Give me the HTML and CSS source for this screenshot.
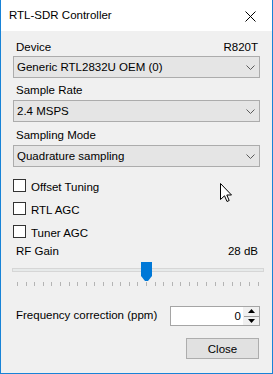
FILE: index.html
```html
<!DOCTYPE html>
<html lang="en">
<head>
	<meta charset="UTF-8">
	<title>RTL-SDR Controller</title>
	<link rel="stylesheet" href="styles.css">
</head>
<body>
	<div class="window">
		<div class="titlebar">
			<span class="title">RTL-SDR Controller</span>
			<svg class="close-x" width="11" height="11" viewBox="0 0 11 11">
				<path d="M0.5 0.5 L10.5 10.5 M10.5 0.5 L0.5 10.5" stroke="#000" stroke-width="1" fill="none"/>
			</svg>
		</div>
		<div class="content">
			<div class="label-row first">
				<span>Device</span>
				<span class="right">R820T</span>
			</div>
			<div class="combo first">
				<span>Generic RTL2832U OEM (0)</span>
				<svg class="chev" width="9" height="5" viewBox="0 0 9 5"><path d="M0.5 0.5 L4.5 4.5 L8.5 0.5" stroke="#5a5a5a" fill="none"/></svg>
			</div>
			<div class="label-row rate">
				<span>Sample Rate</span>
			</div>
			<div class="combo">
				<span>2.4 MSPS</span>
				<svg class="chev" width="9" height="5" viewBox="0 0 9 5"><path d="M0.5 0.5 L4.5 4.5 L8.5 0.5" stroke="#5a5a5a" fill="none"/></svg>
			</div>
			<div class="label-row mode">
				<span>Sampling Mode</span>
			</div>
			<div class="combo">
				<span>Quadrature sampling</span>
				<svg class="chev" width="9" height="5" viewBox="0 0 9 5"><path d="M0.5 0.5 L4.5 4.5 L8.5 0.5" stroke="#5a5a5a" fill="none"/></svg>
			</div>

			<div class="check first"><span class="box"></span><span class="text">Offset Tuning</span></div>
			<div class="check"><span class="box"></span><span class="text">RTL AGC</span></div>
			<div class="check"><span class="box"></span><span class="text">Tuner AGC</span></div>

			<div class="label-row gain">
				<span>RF Gain</span>
				<span class="right">28 dB</span>
			</div>
			<div class="slider">
				<div class="track"></div>
				<svg class="thumb" width="11" height="20" viewBox="0 0 11 20">
					<path d="M0 0 H11 V14 L7 19 H4 L0 14 Z" fill="#0078d7"/>
				</svg>
			</div>
			<div class="ticks">
				<span></span><span></span><span></span><span></span><span></span><span></span>
				<span></span><span></span><span></span><span></span><span></span><span></span>
				<span></span><span></span><span></span><span></span><span></span><span></span>
				<span></span><span></span><span></span><span></span><span></span><span></span>
				<span></span><span></span><span></span><span></span><span></span>
			</div>

			<div class="freq-row">
				<span class="freq-label">Frequency correction (ppm)</span>
				<div class="updown">
					<span class="value">0</span>
					<div class="spin">
						<span class="up"><svg width="7" height="4" viewBox="0 0 7 4"><path d="M3.5 0 L7 4 H0 Z" fill="#000"/></svg></span>
						<span class="down"><svg width="7" height="4" viewBox="0 0 7 4"><path d="M0 0 H7 L3.5 4 Z" fill="#000"/></svg></span>
					</div>
				</div>
			</div>
			<div class="actions">
				<button class="btn">Close</button>
			</div>
		</div>
		<svg class="cursor" width="13" height="20" viewBox="0 0 13 20">
			<path d="M0.5 0.5 V16.5 L4.5 12.8 L7 18.5 L9.2 17.5 L6.8 12 H11.5 Z" fill="#fff" stroke="#000" stroke-width="1" stroke-linejoin="miter"/>
		</svg>
	</div>
</body>
</html>
```

FILE: styles.css
```css
	html, body{
		margin:0;
		padding:0;
		background:#f0f0f0;
	}
	.window{
		position:relative;
		width:273px;
		height:374px;
		box-sizing:border-box;
		border:1px solid #1883d7;
		border-top:none;
		background:#f0f0f0;
		display:flex;
		flex-direction:column;
		font-family:"Liberation Sans", Arial, sans-serif;
		font-size:11.5px;
		color:#000;
	}
	.titlebar{
		height:31px;
		background:#fff;
		display:flex;
		align-items:center;
		padding-left:8px;
	}
	.title{
		line-height:15px;
		flex:1;
	}
	.close-x{
		align-self:flex-start;
		margin-top:11px;
		margin-right:16px;
	}
	.content{
		flex:1;
		padding:9px 12px 0 12px;
		display:flex;
		flex-direction:column;
	}
	.label-row{
		height:15px;
		line-height:15px;
		display:flex;
		justify-content:space-between;
		padding:0 2px 0 3px;
	}
	.label-row.rate{ margin-top:5px;}
	.label-row.mode{ margin-top:6px;}
	.label-row.gain{ margin-top:3px;}

	.combo{
		height:22px;
		box-sizing:border-box;
		margin-top:2px;
		border:1px solid #acacac;
		background:#e5e5e5;
		display:flex;
		align-items:center;
		justify-content:space-between;
		padding:0 4px 0 3px;
		line-height:15px;
	}
	.combo.first{ margin-top:1px;}

	.check{
		display:flex;
		align-items:flex-start;
		margin-top:7px;
		height:16px;
	}
	.check.first{ margin-top:12px;}
	.check .box{
		width:13px;
		height:13px;
		box-sizing:border-box;
		border:1px solid #333;
		background:#fff;
		margin-right:5px;
	}
	.check .text{
		line-height:15px;
		margin-top:1px;
	}

	.slider{
		position:relative;
		height:20px;
		margin:3px 0 0 -1px;
		width:252px;
	}
	.track{
		position:absolute;
		left:0;
		right:0;
		top:6px;
		height:4px;
		box-sizing:border-box;
		border:1px solid #d6d6d6;
		background:#e7eaea;
	}
	.thumb{
		position:absolute;
		left:129px;
		top:0;
	}
	.ticks{
		display:flex;
		justify-content:space-between;
		height:4px;
		width:242px;
		margin-left:4px;
	}
	.ticks span{
		width:1px;
		height:4px;
		background:#b4b4b4;
	}

	.freq-row{
		display:flex;
		align-items:flex-start;
		justify-content:space-between;
		margin-top:20px;
		height:20px;
	}
	.freq-label{
		line-height:15px;
		margin-top:2px;
		padding-left:3px;
	}
	.updown{
		width:90px;
		height:20px;
		box-sizing:border-box;
		border:1px solid #a5a5a5;
		background:#fff;
		display:flex;
	}
	.updown .value{
		flex:1;
		text-align:right;
		line-height:18px;
		padding-right:2px;
	}
	.spin{
		width:15px;
		display:flex;
		flex-direction:column;
		border-left:1px solid #f0f0f0;
	}
	.spin span{
		flex:1;
		background:#f0f0f0;
		display:flex;
		align-items:center;
		justify-content:center;
	}
	.spin .up{ border-bottom:1px solid #a0a0a0;}

	.actions{
		display:flex;
		justify-content:flex-end;
		margin-top:12px;
		padding-right:1px;
	}
	.btn{
		width:73px;
		height:21px;
		box-sizing:border-box;
		border:1px solid #adadad;
		background:#e1e1e1;
		font-family:"Liberation Sans", Arial, sans-serif;
		font-size:11.5px;
		color:#000;
		padding:0;
	}
	.cursor{
		position:absolute;
		left:219px;
		top:183px;
	}
```
